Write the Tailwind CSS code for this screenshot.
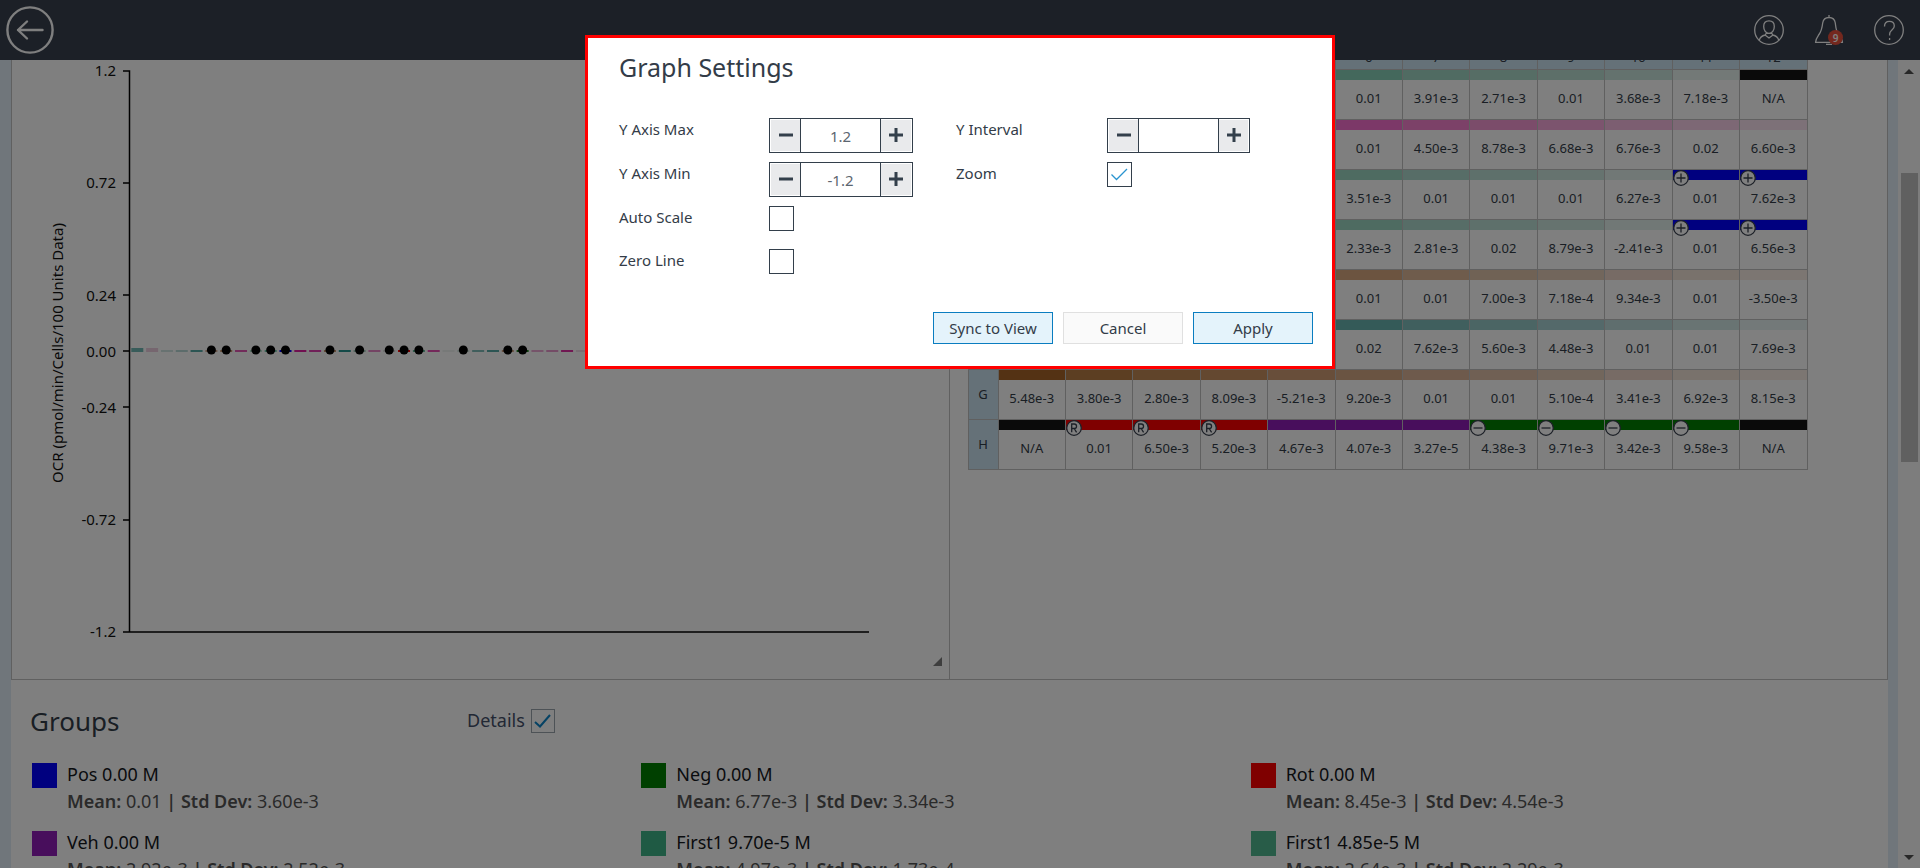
<!DOCTYPE html>
<html lang="en">
<head>
<meta charset="utf-8">
<title>Graph Settings</title>
<meta name="viewport" content="width=device-width, initial-scale=1">
<script src="https://cdn.jsdelivr.net/npm/@tailwindcss/browser@4"></script>
</head>
<body class="flex h-screen flex-col overflow-hidden bg-[#e1edf6] font-['Noto_Sans',sans-serif] text-[#333c48]">

<header class="flex h-[60px] shrink-0 items-center justify-between bg-[#39414f] pr-4 pl-[6px]">
  <button type="button" aria-label="Back">
    <svg class="size-12" viewBox="0 0 48 48" fill="none" stroke="#fff" stroke-width="2.4" stroke-linecap="round" stroke-linejoin="round"><circle cx="24" cy="24" r="22.6"/><path d="M36.5 24H12M21 15.500 12 24l9 8.500"/></svg>
  </button>
  <nav class="flex items-center gap-[30px]">
    <button type="button" aria-label="Account">
      <svg class="size-[30px]" viewBox="0 0 30 30" fill="none" stroke="#fff" stroke-width="1.300"><circle cx="15" cy="15" r="14.300"/><path d="M15 5.800c3.600 0 5.300 2.400 5.300 5.600 0 3.800-2.200 7-5.300 7s-5.300-3.200-5.300-7c0-3.200 1.700-5.600 5.300-5.600zM5.200 25.300c.8-3 2.800-4.600 6-5.300l1.500-2.500M24.800 25.300c-.8-3-2.800-4.600-6-5.300l-1.500-2.500M11 20l4 3 4-3"/></svg>
    </button>
    <button type="button" aria-label="Notifications" class="relative">
      <svg class="size-[30px]" viewBox="0 0 30 30" fill="none" stroke="#fff" stroke-width="1.300"><path d="M15 0v2.500M1.600 27.300h26.800c0-3.300-1.400-4.800-3.900-7.800-2.500-3.500-2.600-6.500-3.200-11.500C20.800 4.500 19 2.500 15 2.500S9.200 4.500 8.700 8C8.100 13 7.500 16 5 19.500 2.900 22.500 1.600 24 1.600 27.300zM12 29.300h6"/></svg>
      <span class="absolute top-[15px] left-[14px] flex size-[15px] items-center justify-center rounded-full bg-[#e8503c] text-[10px] leading-none font-semibold text-white">9</span>
    </button>
    <button type="button" aria-label="Help">
      <svg class="size-[30px]" viewBox="0 0 30 30" fill="none" stroke="#fff" stroke-width="1.300"><circle cx="15" cy="15" r="14.300"/><path d="M10.500 11.500c0-3.400 2-5.200 4.900-5.200 3 0 4.900 1.700 4.900 4.600 0 4.200-4.700 4.200-4.700 8.300V20.500M15.600 23v2"/></svg>
    </button>
  </nav>
</header>

<div class="flex min-h-0 flex-1">
  <main class="ml-[11px] flex min-w-0 flex-1 flex-col overflow-hidden bg-white">
    <div class="grid h-[620px] shrink-0 grid-cols-2 border-x border-b border-[#c0c0c0]">
      <section class="relative border-r border-[#c0c0c0]" aria-label="OCR chart">
        <svg id="chart" class="block h-[600px] w-full" role="img" aria-label="OCR by group" font-size="15" fill="#111">
          <g stroke="#000" stroke-width="1.500" fill="none">
            <path d="M111 11h6.500v561M111 123h6M111 235h6M111 291h6M111 347h6M111 460h6M111 572h746"/>
          </g>
          <g text-anchor="end">
            <text x="104" y="16">1.2</text><text x="104" y="128">0.72</text><text x="104" y="241">0.24</text><text x="104" y="297">0.00</text><text x="104" y="353">-0.24</text><text x="104" y="465">-0.72</text><text x="104" y="577">-1.2</text>
          </g>
          <text text-anchor="middle" transform="translate(51 293) rotate(-90)">OCR (pmol/min/Cells/100 Units Data)</text>
        </svg>
        <svg class="absolute right-[7px] bottom-[13px] size-[9px]" viewBox="0 0 9 9"><path d="M9 0v9H0z" fill="#7c7c7c"/></svg>
      </section>
      <section class="overflow-hidden pl-[18px]" aria-label="Plate data">
        <table class="-mt-[21px] w-[840px] table-fixed border-collapse text-center text-[13px]">
          <colgroup><col class="w-[30px]"></colgroup>
          <thead><tr id="head" class="h-[30px] bg-[#cbe3f1] leading-5"></tr></thead>
          <tbody id="plate"></tbody>
        </table>
      </section>
    </div>

    <section class="pr-[30px] pl-[19px]">
      <div class="flex h-[81px] items-center">
        <h2 class="w-[437px] text-[26px] leading-9">Groups</h2>
        <label for="details" class="pr-[6px] text-[18px] text-[#44506a]">Details</label>
        <span class="relative flex"><input id="details" type="checkbox" checked class="size-6 appearance-none border border-[#9aa4ac] bg-white"><svg class="pointer-events-none absolute inset-0 size-6" viewBox="0 0 24 24" fill="none" stroke="#0a84c8" stroke-width="2"><path d="M4 13l5 4.500L19 6"/></svg></span>
      </div>
      <ul id="groups" class="grid grid-cols-3 gap-y-[7px]"></ul>
    </section>
  </main>
  <div class="flex w-8 shrink-0 justify-end">
    <div class="flex w-[22px] flex-col items-center bg-[#fbfbfb]" aria-hidden="true">
      <svg class="mt-[9px] h-[5px] w-[10px]" viewBox="0 0 10 5"><path d="M5 0l5 5H0z" fill="#505050"/></svg>
      <div class="mt-[99px] h-[289px] w-[17px] bg-[#c1c1c1]"></div>
      <svg class="mt-auto mb-[8px] h-[5px] w-[10px]" viewBox="0 0 10 5"><path d="M0 0h10L5 5z" fill="#505050"/></svg>
    </div>
  </div>
</div>

<div class="fixed inset-0 flex items-start justify-center bg-black/50 pt-[35px]">
  <form role="dialog" aria-labelledby="dlg" class="w-[750px] border-[3px] border-[#f00] bg-white pt-[11px] pr-[19px] pb-[22px] pl-[31px] text-[15px]">
    <h1 id="dlg" class="text-[25px] leading-9">Graph Settings</h1>
    <div class="mt-[33px] grid grid-cols-[150px_187px_151px_144px] gap-y-[9px] leading-[22px]">
      <label for="ymax">Y Axis Max</label>
      <div class="flex h-[35px] w-36 border border-[#333f4b]">
        <button type="button" aria-label="Decrease maximum" class="m-px mr-0 flex w-[29px] items-center justify-center bg-[#e9eaec] pb-[2px]"><svg class="size-[14px]" viewBox="0 0 14 14"><path d="M0 7h14" stroke="#333f4b" stroke-width="3"/></svg></button>
        <input id="ymax" type="text" value="1.2" class="w-[81px] border-x border-[#333f4b] text-center text-[#5c6670]">
        <button type="button" aria-label="Increase maximum" class="m-px ml-0 flex flex-1 items-center justify-center bg-[#e9eaec] pb-[2px]"><svg class="size-[14px]" viewBox="0 0 14 14"><path d="M0 7h14M7 0v14" stroke="#333f4b" stroke-width="3"/></svg></button>
      </div>
      <label for="yint">Y Interval</label>
      <div class="flex h-[35px] w-[143px] border border-[#333f4b]">
        <button type="button" aria-label="Decrease interval" class="m-px mr-0 flex w-[29px] items-center justify-center bg-[#e9eaec] pb-[2px]"><svg class="size-[14px]" viewBox="0 0 14 14"><path d="M0 7h14" stroke="#333f4b" stroke-width="3"/></svg></button>
        <input id="yint" type="text" value="" class="w-[81px] border-x border-[#333f4b] text-center text-[#5c6670]">
        <button type="button" aria-label="Increase interval" class="m-px ml-0 flex flex-1 items-center justify-center bg-[#e9eaec] pb-[2px]"><svg class="size-[14px]" viewBox="0 0 14 14"><path d="M0 7h14M7 0v14" stroke="#333f4b" stroke-width="3"/></svg></button>
      </div>
      <label for="ymin">Y Axis Min</label>
      <div class="flex h-[35px] w-36 border border-[#333f4b]">
        <button type="button" aria-label="Decrease minimum" class="m-px mr-0 flex w-[29px] items-center justify-center bg-[#e9eaec] pb-[2px]"><svg class="size-[14px]" viewBox="0 0 14 14"><path d="M0 7h14" stroke="#333f4b" stroke-width="3"/></svg></button>
        <input id="ymin" type="text" value="-1.2" class="w-[81px] border-x border-[#333f4b] text-center text-[#5c6670]">
        <button type="button" aria-label="Increase minimum" class="m-px ml-0 flex flex-1 items-center justify-center bg-[#e9eaec] pb-[2px]"><svg class="size-[14px]" viewBox="0 0 14 14"><path d="M0 7h14M7 0v14" stroke="#333f4b" stroke-width="3"/></svg></button>
      </div>
      <label for="zoom">Zoom</label>
      <span class="relative flex items-start"><input id="zoom" type="checkbox" checked class="size-[25px] appearance-none border border-[#333f4b]"><svg class="pointer-events-none absolute top-0 left-0 size-[25px]" viewBox="0 0 25 25" fill="none" stroke="#2a94d0" stroke-width="1.300"><path d="M4.500 12.500l5 5L20 7"/></svg></span>
      <label for="auto">Auto Scale</label>
      <span class="col-span-3 flex h-[34px] items-start"><input id="auto" type="checkbox" class="size-[25px] appearance-none border border-[#333f4b]"></span>
      <label for="zero">Zero Line</label>
      <span class="col-span-3 flex h-[34px] items-start"><input id="zero" type="checkbox" class="size-[25px] appearance-none border border-[#333f4b]"></span>
    </div>
    <div class="mt-[29px] flex justify-end gap-[10px]">
      <button type="button" class="h-8 w-[120px] border border-[#0a7dc0] bg-[#e4f3fb]">Sync to View</button>
      <button type="button" class="h-8 w-[120px] border border-[#e0e0e0] bg-[#fafafa]">Cancel</button>
      <button type="button" class="h-8 w-[120px] border border-[#0a7dc0] bg-[#e4f3fb]">Apply</button>
    </div>
  </form>
</div>

<script>
// Plate rows: values, strip colours, and the role marker of control wells
const K = '#141414', B = '#0000ff', R = '#ff0000', G = '#008000', V = '#901cb8';
const plate = {
  A: [['N/A','0.01','0.01','0.01','0.01','0.01','3.91e-3','2.71e-3','0.01','3.68e-3','7.18e-3','N/A'], [K,K,K,K,K,'#88d0b8','#a0d6c4','#acdacb','#badfd3','#c8e5dc','#e6f2ee',K]],
  B: [['0.01','0.01','0.01','0.01','0.01','0.01','4.50e-3','8.78e-3','6.68e-3','6.76e-3','0.02','6.60e-3'], [K,K,K,K,K,'#f870d0','#f882d0','#f698d4','#f8a8dc','#f8bce2','#fad0ea','#fae2f0']],
  C: [['0.01','0.01','0.01','0.01','0.01','3.51e-3','0.01','0.01','0.01','6.27e-3','0.01','7.62e-3'], [K,K,K,K,K,'#9cd6c2','#aedace','#bce0d6','#cce6de','#e2f0ec',B,B], {10:'+',11:'+'}],
  D: [['0.01','0.01','0.01','0.01','0.01','2.33e-3','2.81e-3','0.02','8.79e-3','-2.41e-3','0.01','6.56e-3'], [K,K,K,K,K,'#9cd6c2','#aedace','#bce0d6','#cce6de','#e2f0ec',B,B], {10:'+',11:'+'}],
  E: [['0.01','0.01','0.01','0.01','0.01','0.01','0.01','7.00e-3','7.18e-4','9.34e-3','0.01','-3.50e-3'], [K,K,K,K,K,'#d8a880','#deb898','#e0c4aa','#e4ccb8','#eed6ca','#f2e4d8','#f8ece4']],
  F: [['0.01','0.01','0.01','0.01','0.01','0.02','7.62e-3','5.60e-3','4.48e-3','0.01','0.01','7.69e-3'], [K,K,K,K,K,'#68b4b0','#80bebc','#96cac8','#a8d2d4','#bedcdc','#d2e8e6','#e6f2f2']],
  G: [['5.48e-3','3.80e-3','2.80e-3','8.09e-3','-5.21e-3','9.20e-3','0.01','0.01','5.10e-4','3.41e-3','6.92e-3','8.15e-3'], ['#a86428','#b87c44','#c08854','#c89060','#d09c74','#d4a884','#dcb498','#e0c0a8','#e4ccb8','#eed6ca','#f2e4d8','#f8ece4']],
  H: [['N/A','0.01','6.50e-3','5.20e-3','4.67e-3','4.07e-3','3.27e-5','4.38e-3','9.71e-3','3.42e-3','9.58e-3','N/A'], [K,R,R,R,V,V,V,G,G,G,G,K], {1:'R',2:'R',3:'R',7:'-',8:'-',9:'-',10:'-'}]
};
const glyph = {
  '+': '<path d="M8 3.500v9M3.500 8h9"/>',
  '-': '<path d="M3.500 8h9"/>',
  'R': '<path d="M5.700 12.300V4h2.600a2.200 2.200 0 0 1 0 4.500H5.700M8.200 8.500l2.400 3.800"/>'
};
document.getElementById('head').innerHTML = '<th class="border border-[#c0c0c0]"></th>' +
  Array.from({length: 12}, (_, i) => `<th scope="col" class="border border-[#c0c0c0] p-0 pt-[4px] font-normal">${i + 1}</th>`).join('');
document.getElementById('plate').innerHTML = Object.entries(plate).map(([row, [vals, cols, marks = {}]]) =>
  `<tr class="h-[50px]"><th scope="row" class="border border-[#c0c0c0] bg-[#cbe3f1] font-normal">${row}</th>` +
  vals.map((v, i) => `<td class="relative border border-[#c0c0c0] p-0 align-top"><div class="h-[10px]" style="background:${cols[i]}"></div>` +
    (marks[i] ? `<svg class="absolute top-0 left-0 size-4" viewBox="0 0 16 16" fill="none" stroke="#39414f" stroke-width="1.300"><circle cx="8" cy="8" r="7.300" fill="#fff"/>${glyph[marks[i]]}</svg>` : '') +
    `<div class="pt-2 leading-5">${v}</div></td>`).join('') + '</tr>').join('');

// Bars: [colour, has data point, height]
const bars = [['#70b8b4',0,4],['#ecccdf',0,4],['#d0e4e2'],['#b8d8d6'],['#58aaa6'],['#d0a890',1],['#c89870',1],['#e458b4'],['#b0dcc8',1],['#70c8a8',1],['#0000ff',1],['#e020a0'],['#e040b0'],['#c89870',1],['#289490'],['#a0c8b8',1],['#e888c8'],['#d8d8d8',1],['#ff0000',1],['#60b898',1],['#e850b4'],['#eef2f0'],['#d0e4dc',1],['#80bcb8'],['#58aaa6'],['#d0a080',1],['#208020',1],['#eca8d4'],['#e898cc'],['#e030a4'],['#f0dce8']];
document.getElementById('chart').insertAdjacentHTML('beforeend', bars.map(([c, dot, h = 2], i) => {
  const x = 125.3 + i * 14.82;
  return `<rect x="${x - 6}" y="${292 - h}" width="12" height="${h}" fill="${c}"/>` + (dot ? `<circle cx="${x}" cy="290" r="4.500" fill="#000"/>` : '');
}).join(''));

const groups = [['#0000ff','Pos 0.00 M','0.01','3.60e-3'],['#008000','Neg 0.00 M','6.77e-3','3.34e-3'],['#ff0000','Rot 0.00 M','8.45e-3','4.54e-3'],['#901cb8','Veh 0.00 M','2.92e-3','2.52e-3'],['#3fb489','First1 9.70e-5 M','4.97e-3','1.73e-4'],['#50b890','First1 4.85e-5 M','2.64e-3','2.29e-3']];
document.getElementById('groups').innerHTML = groups.map(([c, n, m, s]) =>
  `<li class="flex items-start gap-[10px] pl-[2px] text-[18px]"><span class="mt-[2px] size-[25px]" style="background:${c}"></span><div><p class="leading-[26px] text-[#15181d]">${n}</p><p class="mt-px mb-2 leading-[26px] whitespace-pre text-[#555]"><b class="font-semibold">Mean:</b> ${m} <b class="font-semibold">|</b> <b class="font-semibold">Std Dev:</b> ${s}</p></div></li>`).join('');
</script>
</body>
</html>
